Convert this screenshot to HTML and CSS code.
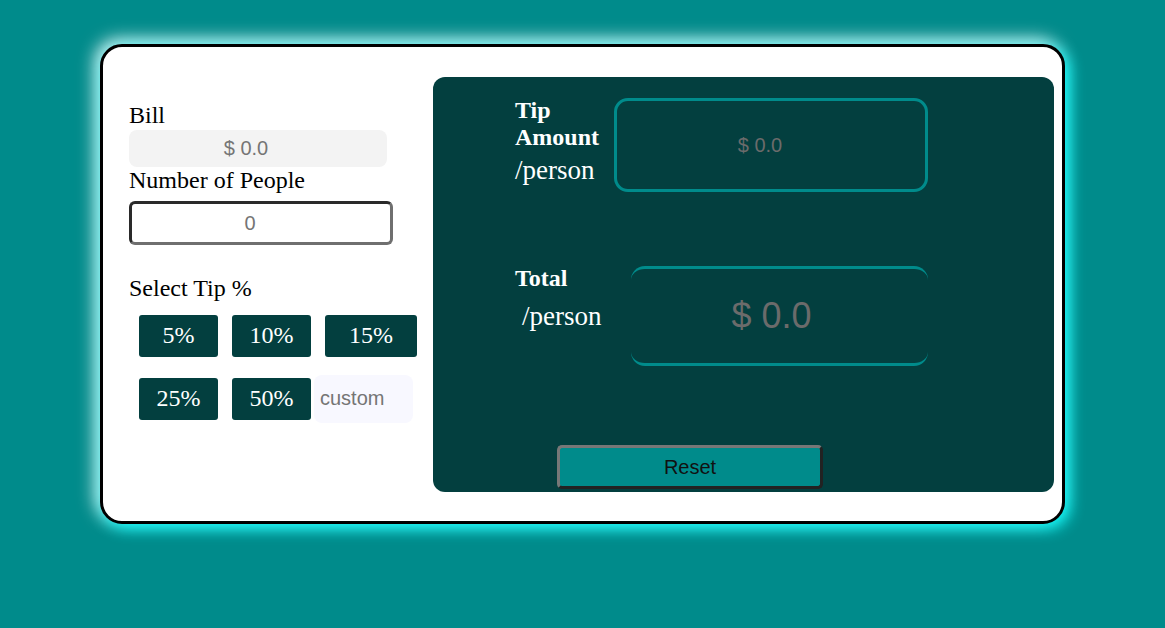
FILE: index.html
```html
<!DOCTYPE html>
<html lang="en">
<head>
<meta charset="utf-8">
<title>Tip Calculator</title>
<link rel="stylesheet" href="styles.css">
</head>
<body>
<main class="card">
  <section class="inputs">
    <label class="label" for="bill">Bill</label>
    <input class="bill" id="bill" type="text" placeholder="$ 0.0">
    <label class="label" for="people">Number of People</label>
    <input class="people" id="people" type="text" placeholder="0">
    <div class="label tip-title">Select Tip %</div>
    <div class="tip-row">
      <button class="tip">5%</button>
      <button class="tip">10%</button>
      <button class="tip wide">15%</button>
    </div>
    <div class="tip-row second">
      <button class="tip">25%</button>
      <button class="tip">50%</button>
      <input class="custom" type="text" placeholder="custom">
    </div>
  </section>
  <section class="results">
    <div class="result-row tip-amount">
      <div class="result-label"><strong>Tip Amount</strong><span class="per">/person</span></div>
      <div class="result-box">$ 0.0</div>
    </div>
    <div class="result-row total">
      <div class="result-label"><strong>Total</strong><span class="per indent">/person</span></div>
      <div class="result-box big">$ 0.0</div>
    </div>
    <button class="reset">Reset</button>
  </section>
</main>
</body>
</html>
```

FILE: styles.css
```css
* { box-sizing: border-box; }

body {
  margin: 0;
  background: #008b8b;
  font-family: "Liberation Serif", "Times New Roman", serif;
  height: 628px;
  overflow: hidden;
}

.card {
  margin: 44px 0 0 100px;
  width: 965px;
  height: 480px;
  background: #fff;
  border: 3px solid #000;
  border-radius: 22px;
  box-shadow: 4px 4px 16px #00ffff, -4px -4px 18px #ffffff;
  display: flex;
  align-items: flex-start;
}

.inputs {
  width: 330px;
  flex-shrink: 0;
  padding: 55px 0 0 26px;
  display: flex;
  flex-direction: column;
  align-items: flex-start;
}
.inputs > * { flex-shrink: 0; }

.label {
  font-size: 24px;
  line-height: 27.6px;
  color: #000;
}

input {
  font-family: "Liberation Sans", Arial, sans-serif;
  font-size: 20px;
  outline: none;
}
input::placeholder { color: #757575; }

.bill {
  width: 258px;
  height: 37px;
  border: none;
  border-radius: 8px;
  background: #f3f3f3;
  text-align: center;
  padding: 0 24px 0 0;
}

.people {
  margin-top: 7px;
  width: 264px;
  height: 44px;
  border: 3px solid;
  border-color: #2a2a2a #6f6f6f #6f6f6f #2a2a2a;
  border-radius: 6px;
  background: #fff;
  text-align: center;
  padding: 0 22px 0 0;
}

.tip-title { margin-top: 30px; }

.tip-row {
  display: flex;
  align-items: center;
  margin-left: 10px;
  margin-top: 12px;
}
.tip-row.second { margin-top: 18px; }

.tip {
  width: 79px;
  height: 42px;
  margin-right: 14px;
  border: none;
  border-radius: 3px;
  background: #033f3f;
  color: #fff;
  font-family: "Liberation Serif", "Times New Roman", serif;
  font-size: 24px;
  padding: 0;
}
.tip.wide { width: 92px; margin-right: 0; }
.tip-row:first-of-type .tip:nth-child(2) { margin-right: 13px; }
.tip-row.second .tip:nth-child(2) { margin-right: 3px; }

.custom {
  width: 99px;
  height: 48px;
  border: none;
  border-radius: 8px;
  background: #f8f8ff;
  padding-left: 6px;
}

.results {
  margin-top: 30px;
  width: 621px;
  height: 415px;
  flex-shrink: 0;
  background: #033f3f;
  border-radius: 12px;
  padding: 20px 0 0 82px;
  display: flex;
  flex-direction: column;
  align-items: flex-start;
  color: #fff;
}
.results > * { flex-shrink: 0; }

.result-row {
  display: flex;
  align-items: flex-start;
}

.result-label {
  display: flex;
  flex-direction: column;
}
.result-label strong {
  font-size: 24px;
  line-height: 27px;
  font-weight: bold;
}
.per {
  font-size: 27px;
  line-height: 31px;
  margin-top: 4px;
}
.per.indent { padding-left: 7px; margin-top: 9px; }

.tip-amount .result-label { width: 99px; }
.total { margin-top: 73px; }
.total .result-label { width: 116px; }

.result-box {
  font-family: "Liberation Sans", Arial, sans-serif;
  color: #6b6b6b;
  display: flex;
  align-items: center;
  justify-content: center;
}

.tip-amount .result-box {
  margin-top: 1px;
  width: 314px;
  height: 94px;
  border: 3px solid #008b8b;
  border-radius: 14px;
  font-size: 20px;
  padding-right: 22px;
}

.result-box.big {
  margin-top: 1px;
  width: 297px;
  height: 100px;
  border-top: 3px solid #008b8b;
  border-bottom: 3px solid #008b8b;
  border-radius: 14px;
  font-size: 36px;
  padding-right: 16px;
}

.reset {
  margin: 79px 0 0 42px;
  width: 266px;
  height: 44px;
  background: #008b8b;
  border: 3px solid;
  border-color: #777777 #222222 #222222 #777777;
  border-radius: 5px;
  font-family: "Liberation Sans", Arial, sans-serif;
  font-size: 20px;
  color: #111;
  padding: 0;
}
```
